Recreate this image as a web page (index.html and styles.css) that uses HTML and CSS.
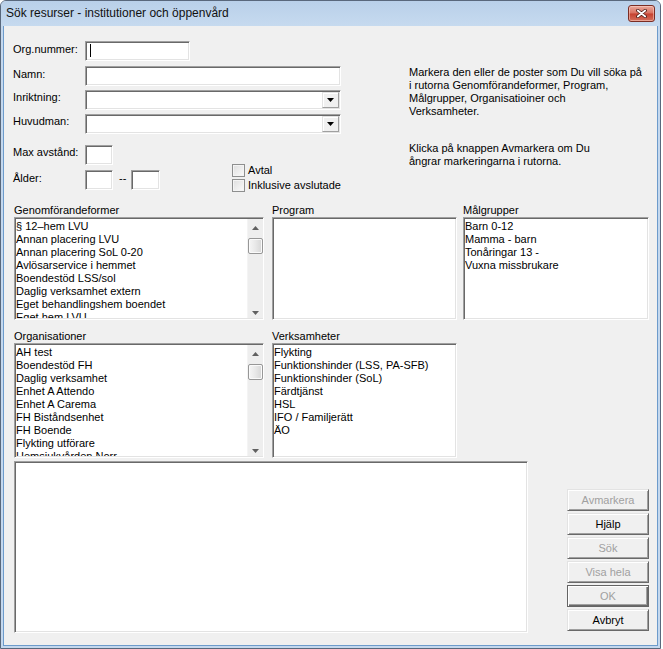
FILE: index.html
```html
<!DOCTYPE html>
<html lang="sv">
<head>
<meta charset="utf-8">
<title>Sök resurser - institutioner och öppenvård</title>
<link rel="stylesheet" href="styles.css">
</head>
<body>
<div class="window">
  <div class="titlebar">
    <span class="title">Sök resurser - institutioner och öppenvård</span>
    <div class="close">
      <svg width="11" height="9" viewBox="0 0 11 9"><path d="M1.8 1.5 L9.2 7.5 M9.2 1.5 L1.8 7.5" stroke="#4a1d17" stroke-width="3.4" stroke-linecap="round" fill="none"/><path d="M1.8 1.5 L9.2 7.5 M9.2 1.5 L1.8 7.5" stroke="#ffffff" stroke-width="1.8" stroke-linecap="round" fill="none"/></svg>
    </div>
  </div>
  <div class="client">
    <div class="top">
      <div class="form">
        <div class="row">
          <span class="lbl">Org.nummer:</span>
          <div class="field w-org"><span class="caret"></span></div>
        </div>
        <div class="row r-namn">
          <span class="lbl">Namn:</span>
          <div class="field w-wide"></div>
        </div>
        <div class="row r-combo">
          <span class="lbl lbl-c">Inriktning:</span>
          <div class="field combo w-wide"><span class="dd"><svg width="7" height="4" viewBox="0 0 7 4"><polygon points="0,0 7,0 3.5,4" fill="#000"/></svg></span></div>
        </div>
        <div class="row r-combo">
          <span class="lbl lbl-c">Huvudman:</span>
          <div class="field combo w-wide"><span class="dd"><svg width="7" height="4" viewBox="0 0 7 4"><polygon points="0,0 7,0 3.5,4" fill="#000"/></svg></span></div>
        </div>
        <div class="lower">
          <div class="lowleft">
            <div class="row">
              <span class="lbl lbl-max">Max avstånd:</span>
              <div class="field w-small"></div>
            </div>
            <div class="row r-alder">
              <span class="lbl">Ålder:</span>
              <div class="field w-small"></div>
              <span class="dash">--</span>
              <div class="field w-small2"></div>
            </div>
          </div>
          <div class="checks">
            <div class="check"><span class="cb"></span><span class="cbl">Avtal</span></div>
            <div class="check"><span class="cb"></span><span class="cbl">Inklusive avslutade</span></div>
          </div>
        </div>
      </div>
      <div class="info">
        <p>Markera den eller de poster som Du vill söka på<br>i rutorna Genomförandeformer, Program,<br>Målgrupper, Organisatioiner och<br>Verksamheter.</p>
        <p class="p2">Klicka på knappen Avmarkera om Du<br>ångrar markeringarna i rutorna.</p>
      </div>
    </div>

    <div class="lists lists1">
      <div class="group g-wide">
        <span class="glabel">Genomförandeformer</span>
        <div class="list list-sb h1">
          <div class="items">
            <div>§ 12–hem LVU</div>
            <div>Annan placering LVU</div>
            <div>Annan placering SoL 0-20</div>
            <div>Avlösarservice i hemmet</div>
            <div>Boendestöd LSS/sol</div>
            <div>Daglig verksamhet extern</div>
            <div>Eget behandlingshem boendet</div>
            <div>Eget hem LVU</div>
          </div>
          <div class="sb">
            <div class="sb-up"><svg width="7" height="4" viewBox="0 0 7 4"><polygon points="0,4 7,4 3.5,0" fill="#606060"/></svg></div>
            <div class="thumb"></div>
            <div class="sb-track"></div>
            <div class="sb-down"><svg width="7" height="4" viewBox="0 0 7 4"><polygon points="0,0 7,0 3.5,4" fill="#606060"/></svg></div>
          </div>
        </div>
      </div>
      <div class="group g-mid">
        <span class="glabel">Program</span>
        <div class="list h1"><div class="items"></div></div>
      </div>
      <div class="group g-right">
        <span class="glabel">Målgrupper</span>
        <div class="list h1">
          <div class="items">
            <div>Barn 0-12</div>
            <div>Mamma - barn</div>
            <div>Tonåringar 13 -</div>
            <div>Vuxna missbrukare</div>
          </div>
        </div>
      </div>
    </div>

    <div class="lists lists2">
      <div class="group g-wide">
        <span class="glabel">Organisationer</span>
        <div class="list list-sb h2">
          <div class="items">
            <div>AH test</div>
            <div>Boendestöd FH</div>
            <div>Daglig verksamhet</div>
            <div>Enhet A Attendo</div>
            <div>Enhet A Carema</div>
            <div>FH Biståndsenhet</div>
            <div>FH Boende</div>
            <div>Flykting utförare</div>
            <div>Hemsjukvården Norr</div>
          </div>
          <div class="sb">
            <div class="sb-up"><svg width="7" height="4" viewBox="0 0 7 4"><polygon points="0,4 7,4 3.5,0" fill="#606060"/></svg></div>
            <div class="thumb"></div>
            <div class="sb-track"></div>
            <div class="sb-down"><svg width="7" height="4" viewBox="0 0 7 4"><polygon points="0,0 7,0 3.5,4" fill="#606060"/></svg></div>
          </div>
        </div>
      </div>
      <div class="group g-mid">
        <span class="glabel">Verksamheter</span>
        <div class="list h2">
          <div class="items">
            <div>Flykting</div>
            <div>Funktionshinder (LSS, PA-SFB)</div>
            <div>Funktionshinder (SoL)</div>
            <div>Färdtjänst</div>
            <div>HSL</div>
            <div>IFO / Familjerätt</div>
            <div>ÄO</div>
          </div>
        </div>
      </div>
    </div>

    <div class="bottom">
      <div class="field bigbox"></div>
      <div class="buttons">
        <div class="btn disabled">Avmarkera</div>
        <div class="btn">Hjälp</div>
        <div class="btn disabled">Sök</div>
        <div class="btn disabled">Visa hela</div>
        <div class="btn default disabled">OK</div>
        <div class="btn">Avbryt</div>
      </div>
    </div>
  </div>
</div>
</body>
</html>
```

FILE: styles.css
```css
* { box-sizing: border-box; }

body {
  margin: 0;
  background: #ffffff;
  font-family: "Liberation Sans", Arial, sans-serif;
  font-size: 11px;
  color: #000;
}

.window {
  width: 661px;
  height: 649px;
  border: 1px solid #59687c;
  border-radius: 6px 6px 0 0;
  background: #c4d8ee;
  display: flex;
  flex-direction: column;
}

.titlebar {
  height: 25px;
  flex: none;
  display: flex;
  justify-content: space-between;
  align-items: flex-start;
  background: linear-gradient(#b9d0e9, #c6daef);
  border-radius: 5px 5px 0 0;
}

.title {
  font-size: 12px;
  line-height: 25px;
  padding-left: 5px;
  color: #111;
}

.close {
  width: 27px;
  height: 17px;
  margin: 4px 5px 0 0;
  border: 1px solid #7b2d24;
  border-radius: 3px;
  background: linear-gradient(#eaa99c, #d9705f 48%, #c5412f 52%, #d5705c);
  box-shadow: inset 0 0 0 1px rgba(255, 220, 210, 0.5);
  display: flex;
  align-items: center;
  justify-content: center;
}

.close svg { display: block; }

.client {
  flex: 1;
  margin: 0 2px 2px;
  border: 1px solid #6d9bcb;
  border-top: none;
  background: #f0f0f0;
  padding: 15px 0 0 9px;
}

/* ---- top form ---- */
.top {
  display: flex;
  align-items: flex-start;
}

.form {
  width: 328px;
  flex: none;
}

.row {
  display: flex;
  align-items: flex-start;
}

.r-namn { margin-top: 5px; }
.r-combo { margin-top: 4px; }
.r-alder { margin-top: 5px; }

.lbl {
  width: 72px;
  flex: none;
  line-height: 13px;
  padding-top: 2px;
  white-space: nowrap;
}

.lbl-c { padding-top: 1px; }
.lbl-max { padding-top: 1px; }

.field {
  background: #fff;
  border: 1px solid;
  border-color: #a0a0a0 #fff #fff #a0a0a0;
  box-shadow: inset 1px 1px 0 #696969, inset -1px -1px 0 #e3e3e3;
  height: 20px;
  padding: 1px;
  flex: none;
}

.w-org { width: 105px; }
.w-wide { width: 256px; }
.w-small { width: 28px; }
.w-small2 { width: 29px; }

.caret {
  display: block;
  width: 1px;
  height: 13px;
  margin: 1px 0 0 3px;
  background: #000;
}

.combo {
  display: flex;
  justify-content: flex-end;
}

.dd {
  width: 17px;
  height: 100%;
  background: #f0f0f0;
  border: 1px solid;
  border-color: #e3e3e3 #a0a0a0 #a0a0a0 #e3e3e3;
  box-shadow: inset 1px 1px 0 #fff;
  display: flex;
  align-items: center;
  justify-content: center;
}

.dd svg { display: block; }

.lower {
  margin-top: 11px;
  display: flex;
  align-items: flex-start;
}

.lowleft { width: 150px; flex: none; }

.dash {
  flex: none;
  white-space: nowrap;
  line-height: 13px;
  margin: 2px 5px 0 6px;
}

.checks {
  margin: 19px 0 0 69px;
  display: flex;
  flex-direction: column;
  gap: 2px;
}

.check {
  display: flex;
  align-items: center;
  height: 13px;
}

.cb {
  width: 13px;
  height: 13px;
  flex: none;
  border: 1px solid #8e8f8f;
  background: linear-gradient(135deg, #dedede, #fbfbfb);
  box-shadow: inset 0 0 0 1px #f4f4f4;
}

.cbl {
  margin-left: 3px;
  line-height: 13px;
  white-space: nowrap;
}

.info {
  margin: 25px 0 0 68px;
  line-height: 13px;
  white-space: nowrap;
}

.info p { margin: 0; }
.info .p2 { margin-top: 24px; }

/* ---- lists ---- */
.lists {
  display: flex;
  margin-left: 1px;
}

.lists1 { margin-top: 12px; }
.lists2 { margin-top: 10px; }

.group {
  display: flex;
  flex-direction: column;
}

.g-wide { width: 250px; }
.g-mid { width: 185px; margin-left: 8px; }
.g-right { width: 186px; margin-left: 6px; }

.glabel {
  line-height: 13px;
  white-space: nowrap;
}

.list {
  background: #fff;
  border: 1px solid;
  border-color: #a0a0a0 #fff #fff #a0a0a0;
  box-shadow: inset 1px 1px 0 #696969, inset -1px -1px 0 #e3e3e3;
  padding: 1px;
  display: flex;
  overflow: hidden;
}

.list-sb { padding-right: 0; }

.h1 { height: 103px; }
.h2 { height: 115px; }

.items {
  flex: 1;
  padding-top: 1px;
  line-height: 13px;
  white-space: nowrap;
  overflow: hidden;
}

.sb {
  width: 16px;
  flex: none;
  display: flex;
  flex-direction: column;
  background: #eeeeee;
  border-left: 1px solid #f4f4f4;
}

.sb-up {
  height: 17px;
  flex: none;
  display: flex;
  justify-content: center;
  padding-top: 7px;
}

.sb-down {
  height: 17px;
  flex: none;
  display: flex;
  justify-content: center;
  align-items: flex-end;
  padding-bottom: 3px;
}

.sb svg { display: block; }

.thumb {
  height: 16px;
  flex: none;
  margin: 2px 0 0 0;
  border: 1px solid #979797;
  border-radius: 2px;
  background: linear-gradient(90deg, #f6f6f6, #e8e8e8 50%, #d6d6d6);
  box-shadow: inset 0 0 0 1px #fafafa;
}

.sb-track { flex: 1; }

/* ---- bottom ---- */
.bottom {
  display: flex;
  align-items: flex-start;
  margin: 3px 0 0 1px;
}

.bigbox {
  width: 514px;
  height: 172px;
}

.buttons {
  margin: 28px 0 0 39px;
  display: flex;
  flex-direction: column;
  gap: 2px;
}

.btn {
  width: 82px;
  height: 22px;
  background: #f0f0f0;
  border: 1px solid;
  border-color: #e3e3e3 #696969 #696969 #e3e3e3;
  box-shadow: inset 1px 1px 0 #fff, inset -1px -1px 0 #a0a0a0;
  text-align: center;
  line-height: 20px;
  white-space: nowrap;
}

.btn.disabled { color: #a0a0a0; }

.btn.default {
  border-color: #646464;
  box-shadow: inset 1px 1px 0 #fff, inset -1px -1px 0 #696969, inset -2px -2px 0 #a0a0a0;
}
```
